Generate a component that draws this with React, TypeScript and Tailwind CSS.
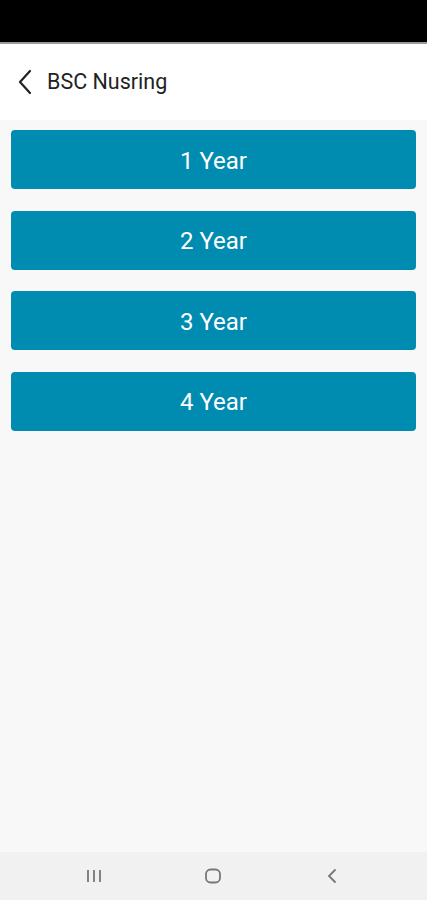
export default function App() {
  const years = ["1 Year", "2 Year", "3 Year", "4 Year"]

  return (
    <div className="flex h-[900px] w-[427px] flex-col bg-[#f8f8f8] font-['Roboto',sans-serif]">
      <div className="h-[42px] bg-black" />
      <div className="h-[2px] bg-[#9a9a9a]" />

      <div className="flex h-[76px] items-center bg-white">
        <button className="ml-[13px] flex h-[30px] w-[24px] items-center justify-center">
          <svg width="16" height="26" viewBox="0 0 16 26" fill="none">
            <path d="M13 2 L3 13 L13 24" stroke="#222" strokeWidth="2.2" strokeLinecap="round" strokeLinejoin="round" />
          </svg>
        </button>
        <h1 className="ml-[10px] text-[21.5px] text-[#222]">BSC Nusring</h1>
      </div>

      <div className="flex flex-1 flex-col gap-[21.5px] px-[11px] pt-[10px]">
        {years.map((year) => (
          <button
            key={year}
            className="h-[59px] w-full rounded-[4px] bg-[#008bb0] pt-[2px] text-[24px] text-white"
          >
            {year}
          </button>
        ))}
      </div>

      <div className="flex h-[48px] items-center bg-[#f1f1f1]">
        <div className="ml-[85px] flex w-[18px] justify-center">
          <svg width="18" height="16" viewBox="0 0 18 16" fill="none">
            <path d="M3 2 V14 M9 2 V14 M15 2 V14" stroke="#777" strokeWidth="1.8" />
          </svg>
        </div>
        <div className="ml-[101px] flex w-[18px] justify-center">
          <svg width="18" height="18" viewBox="0 0 18 18" fill="none">
            <rect x="2" y="2.5" width="14" height="13" rx="4.5" stroke="#777" strokeWidth="1.8" />
          </svg>
        </div>
        <div className="ml-[103px] flex w-[14px] justify-center">
          <svg width="14" height="16" viewBox="0 0 14 16" fill="none">
            <path d="M10 2 L4 8 L10 14" stroke="#777" strokeWidth="1.8" strokeLinecap="round" />
          </svg>
        </div>
      </div>
    </div>
  )
}
